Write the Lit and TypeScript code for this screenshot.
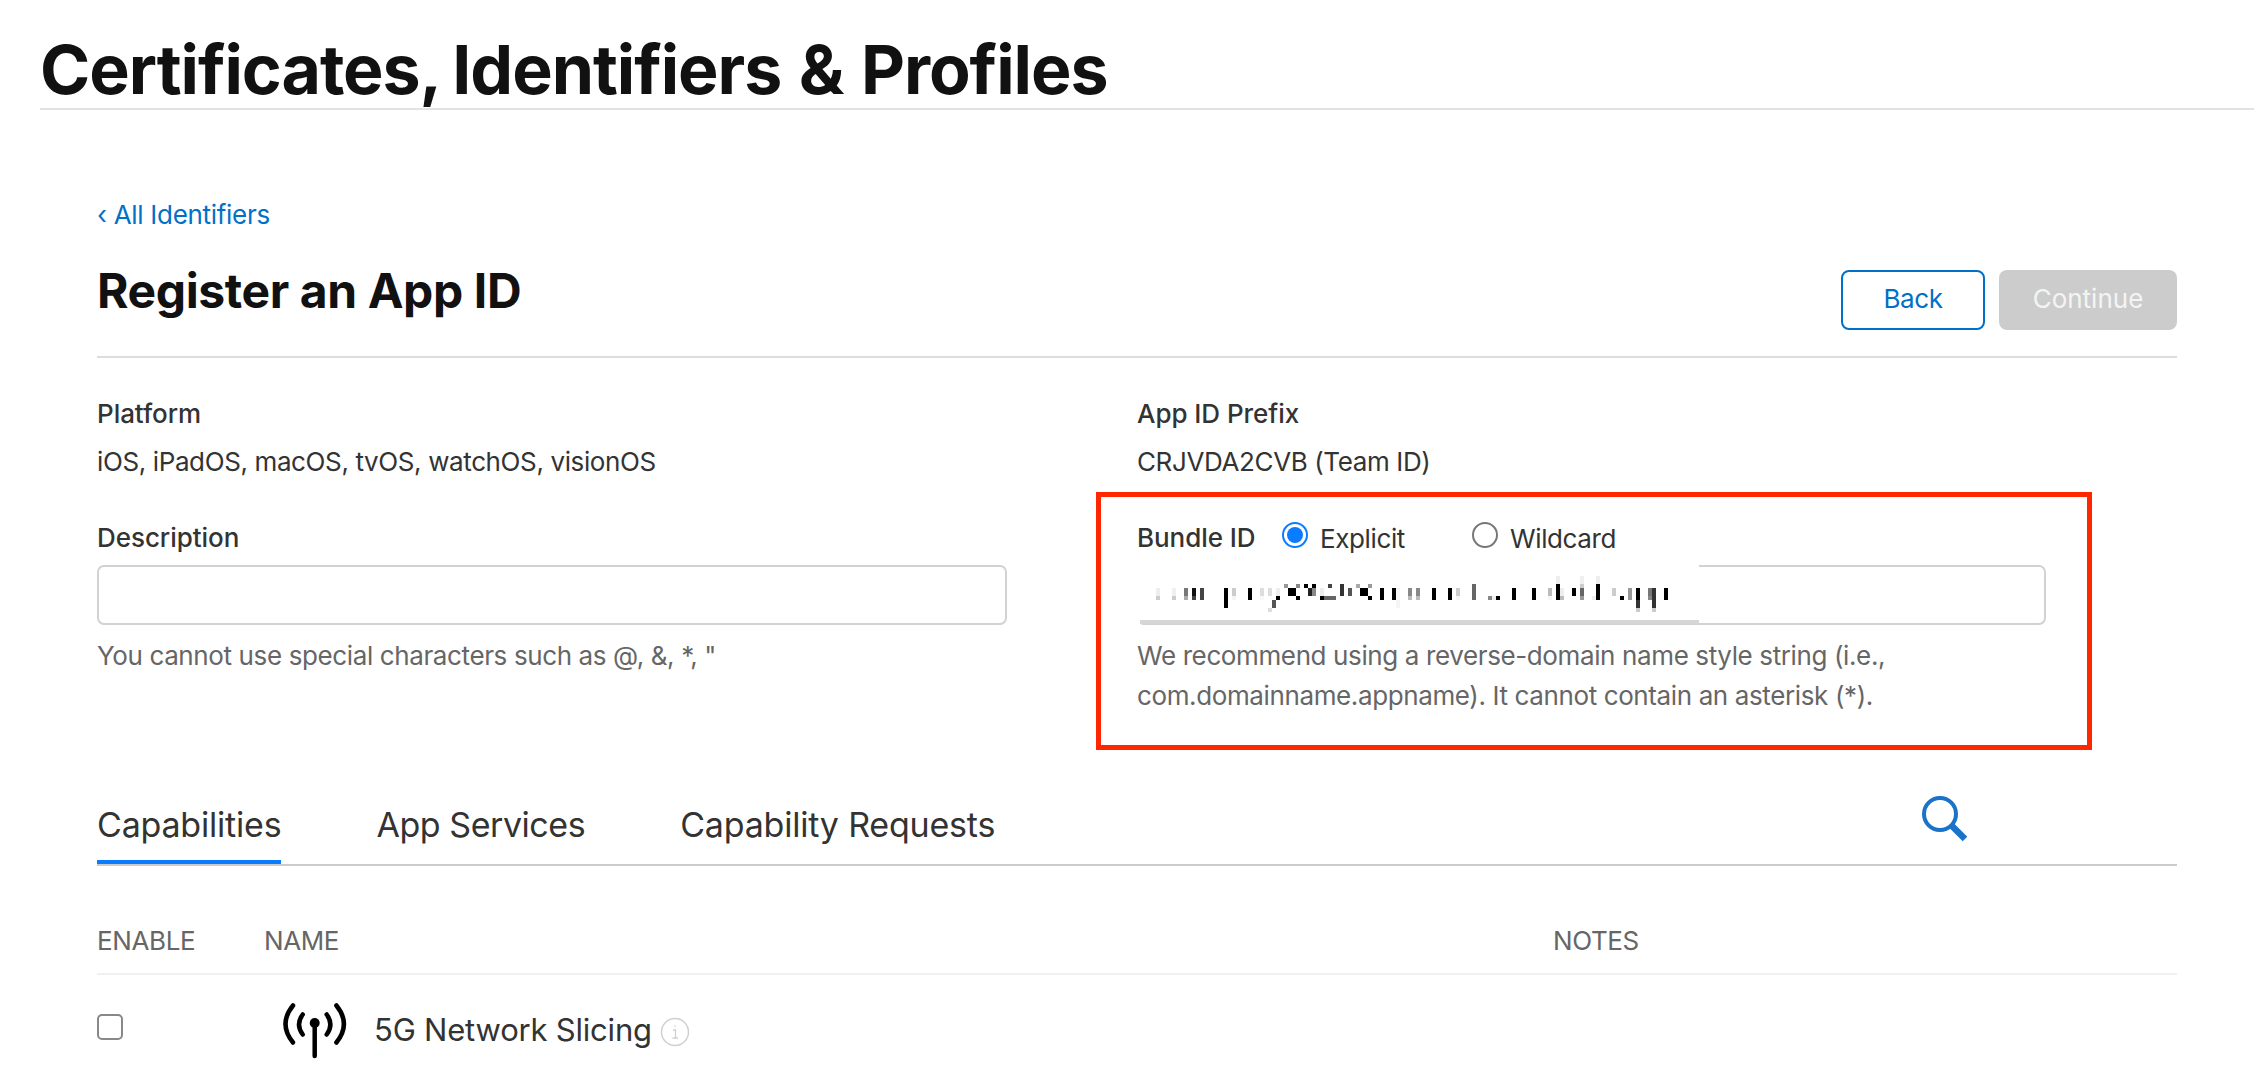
import { LitElement, html, css, svg } from "lit";
import { customElement } from "lit/decorators.js";

// [x, y, height, colour] of each 4px-wide mosaic column, in page pixels
const MOSAIC: [number, number, number, string][] = [
  [1156,588,8,"#eee"],[1156,596,4,"#ccc"],[1172,588,8,"#f0f0f0"],[1172,596,4,"#ccc"],
  [1184,588,8,"#777"],[1184,596,4,"#aaa"],[1192,588,8,"#111"],[1192,596,4,"#444"],
  [1200,588,12,"#444"],[1224,588,20,"#000"],[1232,588,8,"#ccc"],[1232,596,4,"#f4f4f4"],
  [1248,588,12,"#000"],[1260,588,8,"#ddd"],[1260,596,4,"#f8f8f8"],[1268,588,8,"#ddd"],
  [1276,588,8,"#eee"],[1276,596,4,"#000"],[1272,600,8,"#555"],[1268,608,4,"#ddd"],
  [1284,584,4,"#999"],[1288,588,8,"#000"],[1292,588,8,"#000"],[1296,584,4,"#888"],[1296,596,4,"#000"],
  [1304,584,4,"#000"],[1308,588,8,"#222"],[1312,584,4,"#000"],[1312,588,8,"#888"],
  [1320,588,8,"#eee"],[1320,596,4,"#000"],[1324,596,4,"#666"],[1328,596,4,"#666"],[1328,584,4,"#444"],
  [1332,596,4,"#666"],[1340,584,12,"#333"],[1348,588,8,"#555"],[1356,584,4,"#aaa"],
  [1360,588,8,"#000"],[1364,588,8,"#000"],[1368,584,4,"#999"],[1368,596,4,"#000"],
  [1380,588,12,"#000"],[1392,588,12,"#000"],[1396,588,20,"#f5f5f5"],
  [1408,588,8,"#888"],[1408,596,4,"#bbb"],[1416,588,8,"#888"],[1416,596,4,"#bbb"],
  [1432,588,12,"#000"],[1448,588,12,"#000"],[1456,588,8,"#ccc"],[1456,596,4,"#f4f4f4"],
  [1472,584,16,"#666"],[1488,596,4,"#888"],[1492,596,4,"#eee"],[1496,596,4,"#000"],
  [1512,588,12,"#000"],[1532,588,12,"#000"],[1548,588,8,"#bbb"],[1548,596,4,"#f5f5f5"],
  [1556,576,8,"#eee"],[1556,584,16,"#000"],[1560,588,8,"#eee"],[1560,596,4,"#bbb"],
  [1572,588,8,"#000"],[1580,576,8,"#f0f0f0"],[1580,584,4,"#ccc"],[1580,588,8,"#666"],[1580,596,4,"#999"],
  [1592,596,4,"#eee"],[1596,576,8,"#eee"],[1596,584,16,"#000"],[1612,588,8,"#ccc"],
  [1620,596,4,"#000"],[1628,588,12,"#999"],[1636,588,12,"#000"],[1636,600,8,"#333"],[1636,608,4,"#ccc"],
  [1648,588,8,"#777"],[1648,596,4,"#888"],[1652,588,20,"#333"],[1652,608,4,"#ccc"],[1664,588,12,"#000"],
];

@customElement("app-root")
export class AppRoot extends LitElement {
  static styles = css`
    :host {
      display: block;
      height: 100vh;
      overflow: hidden;
      background: #fff;
      color: #333;
      font-family: Inter, "Liberation Sans", sans-serif;
      font-size: 26px;
      letter-spacing: -0.38px;
    }
    .top {
      margin-left: 40px;
      height: 108px;
      border-bottom: 2px solid #e2e2e2;
    }
    h1 {
      margin: 0;
      padding-top: 29px;
      font-size: 68px;
      line-height: 80px;
      font-weight: 700;
      color: #111;
      letter-spacing: -1.05px;
      word-spacing: 2.5px;
      white-space: nowrap;
    }
    .comma {
      margin-right: -6.5px;
    }
    .main {
      position: relative;
      padding: 90px 77px 0 97px;
    }
    .back-link {
      display: block;
      height: 30px;
      line-height: 30px;
      color: #0070c9;
      letter-spacing: -0.3px;
    }
    .head {
      display: flex;
      justify-content: space-between;
      height: 106px;
      padding-top: 20px;
      border-bottom: 2px solid #ddd;
    }
    h2 {
      margin: 0;
      font-size: 48px;
      line-height: 64px;
      font-weight: 700;
      color: #111;
      letter-spacing: -0.4px;
      padding-top: 9px;
    }
    .btns {
      display: flex;
      gap: 14px;
      align-items: flex-start;
      padding-top: 20px;
    }
    .btn {
      height: 60px;
      box-sizing: border-box;
      border-radius: 8px;
      display: flex;
      align-items: center;
      justify-content: center;
      padding-bottom: 3px;
    }
    .btn.back {
      width: 144px;
      border: 2px solid #0070c9;
      color: #0070c9;
    }
    .btn.cont {
      width: 178px;
      background: #ccc;
      color: #f4f4f4;
      letter-spacing: 0;
    }
    .fields {
      display: grid;
      grid-template-columns: 1040px 1fr;
      padding-top: 36px;
    }
    .label {
      height: 40px;
      line-height: 40px;
      font-weight: 500;
      letter-spacing: -0.05px;
    }
    .value {
      height: 40px;
      line-height: 40px;
      margin-top: 8px;
    }
    .gap {
      height: 36px;
    }
    .input {
      position: relative;
      height: 60px;
      width: 910px;
      margin-top: 7px;
      box-sizing: border-box;
      border: 2px solid #d2d2d2;
      border-radius: 7px;
      background: #fff;
    }
    .input.right {
      width: 909px;
    }
    .hint {
      margin-top: 11px;
      line-height: 40px;
      color: #666;
    }
    .bundle-row {
      display: flex;
      align-items: center;
      height: 40px;
    }
    .bundle-row .label {
      width: 145px;
      flex: none;
    }
    .radio {
      display: flex;
      align-items: center;
      justify-content: center;
      width: 26px;
      height: 26px;
      flex: none;
      box-sizing: border-box;
      border-radius: 50%;
      border: 2px solid #777;
      margin-top: -7px;
    }
    .radio.on {
      border-color: #0a7cff;
    }
    .radio.on::after {
      content: "";
      width: 16px;
      height: 16px;
      border-radius: 50%;
      background: #0a7cff;
    }
    .opt {
      margin-left: 12px;
      width: 152px;
    }
    .opt.w {
      width: auto;
    }
    .patch {
      position: absolute;
      left: -3px;
      top: -3px;
      width: 563px;
      height: 60px;
      background: #fff;
    }
    .patch::after {
      content: "";
      position: absolute;
      left: 4px;
      right: 0;
      bottom: 0;
      height: 4px;
      background: #d6d6d6;
    }
    .patch svg {
      display: block;
      margin: 2px 0 0 4px;
    }
    .tabs {
      display: flex;
      height: 74px;
      margin-top: 74px;
      border-bottom: 2px solid #ccc;
      gap: 95px;
    }
    .tab {
      font-size: 34px;
      letter-spacing: -0.2px;
      line-height: 70px;
      height: 74px;
      box-sizing: border-box;
    }
    .tab.on {
      border-bottom: 4px solid #0a7cff;
    }
    .tab.svc {
      letter-spacing: -0.45px;
    }
    .search {
      margin-left: auto;
      margin-right: 209px;
      margin-top: -4px;
      display: block;
    }
    .cols {
      display: grid;
      grid-template-columns: 167px 1289px 1fr;
      align-items: center;
    }
    .thead {
      height: 66px;
      padding-top: 41px;
      border-bottom: 2px solid #f1f1f1;
      color: #666;
    }
    .row {
      height: 100px;
    }
    .check {
      width: 26px;
      height: 26px;
      box-sizing: border-box;
      border: 2px solid #888;
      border-radius: 5px;
      margin-top: 4px;
    }
    .name {
      display: flex;
      align-items: center;
      font-size: 31px;
      letter-spacing: -0.2px;
      margin-top: 10px;
    }
    .name svg {
      display: block;
      flex: none;
    }
    .ant {
      margin-left: 16px;
      margin-right: 24px;
    }
    .name-text {
      margin-top: -2px;
    }
    .name .info {
      margin-left: 8px;
      margin-top: 3px;
    }
    .redbox {
      position: absolute;
      left: 1096px;
      top: 382px;
      width: 996px;
      height: 258px;
      box-sizing: border-box;
      border: 5px solid #ff2600;
    }
  `;

  render() {
    return html`
      <div class="top"><h1><span class="comma">Certificates,</span> Identifiers &amp; Profiles</h1></div>
      <div class="main">
        <a class="back-link">‹ All Identifiers</a>
        <div class="head">
          <h2>Register an App ID</h2>
          <div class="btns">
            <div class="btn back">Back</div>
            <div class="btn cont">Continue</div>
          </div>
        </div>
        <div class="fields">
          <div>
            <div class="label">Platform</div>
            <div class="value">iOS, iPadOS, macOS, tvOS, watchOS, visionOS</div>
            <div class="gap"></div>
            <div class="label">Description</div>
            <div class="input"></div>
            <div class="hint">You cannot use special characters such as @, &amp;, *, "</div>
          </div>
          <div>
            <div class="label">App ID Prefix</div>
            <div class="value">CRJVDA2CVB (Team ID)</div>
            <div class="gap"></div>
            <div class="bundle-row">
              <span class="label">Bundle ID</span>
              <span class="radio on"></span>
              <span class="opt">Explicit</span>
              <span class="radio"></span>
              <span class="opt w">Wildcard</span>
            </div>
            <div class="input right">
              <div class="patch">${this.mosaic()}</div>
            </div>
            <div class="hint">
              We recommend using a reverse-domain name style string (i.e.,<br />
              com.domainname.appname). It cannot contain an asterisk (*).
            </div>
          </div>
        </div>
        <div class="tabs">
          <div class="tab on">Capabilities</div>
          <div class="tab svc">App Services</div>
          <div class="tab">Capability Requests</div>
          <svg class="search" width="56" height="56" viewBox="1912 786 56 56" fill="none" stroke="#1a73c8">
            <circle cx="1940" cy="814" r="16" stroke-width="4"></circle>
            <path d="M1952 826L1965 839" stroke-width="6.5"></path>
          </svg>
        </div>
        <div class="cols thead">
          <span>ENABLE</span><span>NAME</span><span>NOTES</span>
        </div>
        <div class="cols row">
          <div class="check"></div>
          <div class="name">
            <svg class="ant" width="70" height="60" viewBox="30 10 70 60" fill="none" stroke="#000" stroke-linecap="round">
              <path d="M64.7 33V66" stroke-width="4.5"></path>
              <circle cx="64.7" cy="33" r="5" fill="#000" stroke="none"></circle>
              <path d="M52.7 24.5Q45.3 34.5 52.7 44.5M76.7 24.5Q84.1 34.5 76.7 44.5" stroke-width="4.5"></path>
              <path d="M43 15.5Q28 34 43 52.5M86.4 15.5Q101.4 34 86.4 52.5" stroke-width="4.5"></path>
            </svg>
            <span class="name-text">5G Network Slicing</span>
            <svg class="info" width="30" height="30" viewBox="0 0 30 30" fill="none" stroke="#d0d0d0">
              <circle cx="15" cy="15" r="13.5" stroke-width="1.5"></circle>
              <path d="M13 13H15.5V21M12.5 21H18M15 8.5V10" stroke-width="1.3"></path>
            </svg>
          </div>
        </div>
        <div class="redbox"></div>
      </div>
    `;
  }

  mosaic() {
    return html`<svg width="559" height="54" viewBox="1140 566 559 54" shape-rendering="crispEdges">
      ${MOSAIC.map(([x, y, h, c]) => svg`<rect x=${x} y=${y} width="4" height=${h} fill=${c}></rect>`)}
    </svg>`;
  }
}
